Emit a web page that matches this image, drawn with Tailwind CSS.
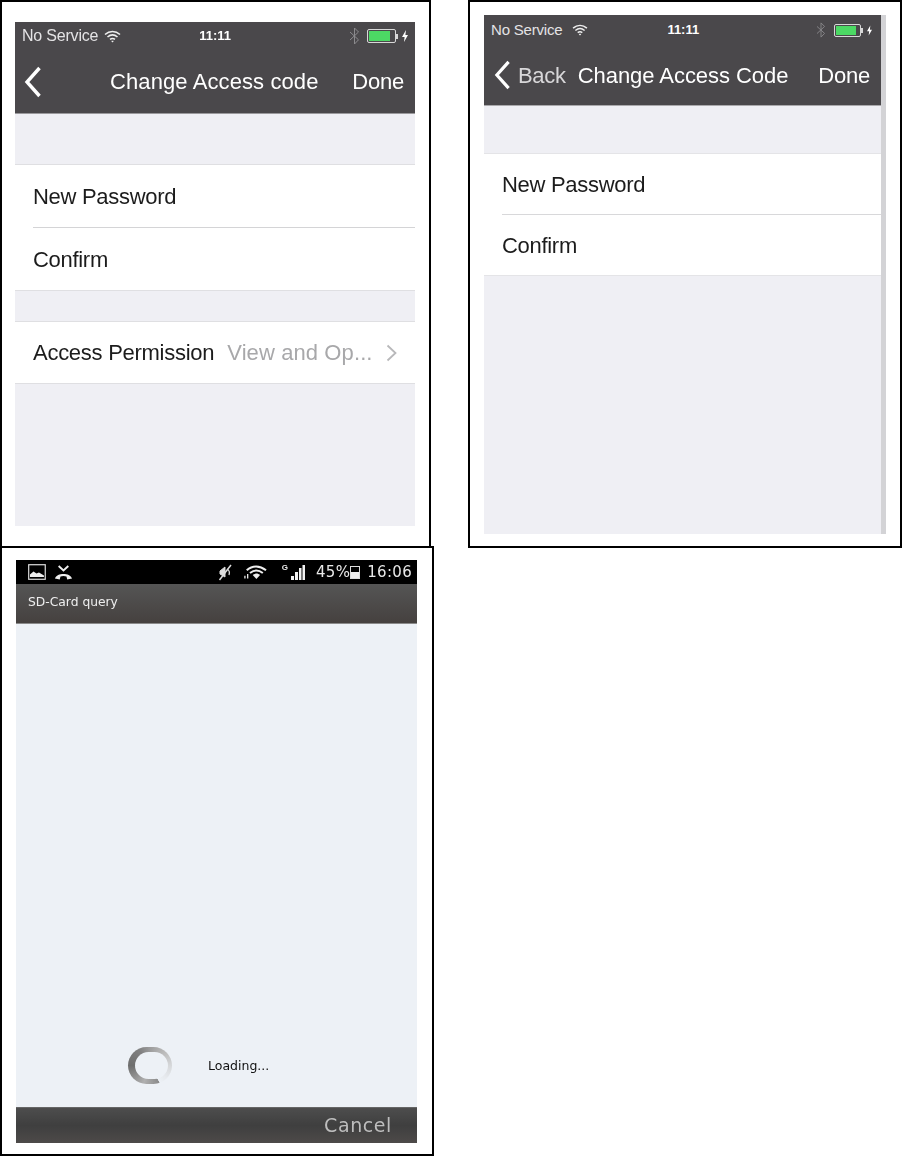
<!DOCTYPE html>
<html lang="en">
<head>
<meta charset="UTF-8">
<title>Access code screens</title>
<script src="https://cdn.jsdelivr.net/npm/@tailwindcss/browser@4"></script>
</head>
<body class="bg-white font-['Liberation_Sans',Arial,sans-serif]">
<div class="flex w-[902px] h-[1157px] items-start overflow-hidden">
  <!-- left column -->
  <div class="w-[434px] shrink-0">
    <!-- Change Access code -->
    <div class="w-[431px] h-[548px] border-2 border-black pl-[13px] pt-[20px]">
      <div class="w-[400px] h-[504px] bg-[#efeff4] flex flex-col blur-[0.4px]">
        <div class="h-[92px] bg-[#4a484b] text-white border-b border-[#9a999c]">
          <div class="h-[28px] flex items-center pl-[7px] pr-[6px] text-[16px] text-[#e4e3e5]">
            <span class="tracking-[-0.2px] whitespace-nowrap">No Service</span>
            <svg class="ml-[6px]" width="17" height="13" viewBox="0 0 17 13" fill="none" stroke="#eee" stroke-width="1.6"><path d="M1 4.500C5.500.5 11.500.5 16 4.500M3.500 7C6.500 4.500 10.500 4.500 13.500 7M6 9.400C7.500 8.300 9.500 8.300 11 9.400"/><path d="M8.500 12.400 7.200 11c.8-.5 1.800-.5 2.600 0z" fill="#eee" stroke="none"/></svg>
            <span class="ml-[78px] text-[13px] font-bold text-white">11:11</span>
            <svg class="ml-[118px]" width="11" height="18" viewBox="0 0 11 18" fill="none" stroke="#8b8a8d" stroke-width="1"><path d="M1 5 9.500 12.800 5.500 17V1L9.500 5 1 13"/></svg>
            <div class="ml-[7px] w-[29px] h-[14px] border border-[#d8d8d8] rounded-[2px] p-[1px]"><div class="w-[21px] h-full bg-[#4cd964]"></div></div>
            <div class="w-[2px] h-[5px] bg-[#d8d8d8]"></div>
            <svg class="ml-[4px]" width="6" height="12" viewBox="0 0 6 12"><path d="M4 0 0 7H2.600L2 12 6 5H3.400z" fill="#fff"/></svg>
          </div>
          <div class="h-[63px] flex items-center pl-[9px] pr-[11px]">
            <svg width="18" height="32" viewBox="0 0 18 32" fill="none" stroke="#fff" stroke-width="3.4"><path d="M15.500 2 3 16l12.500 14"/></svg>
            <span class="ml-[68px] text-[22px] tracking-[0.1px] whitespace-nowrap">Change Access code</span>
            <span class="ml-auto text-[22px] tracking-[-0.2px]">Done</span>
          </div>
        </div>
        <div class="mt-[50px] bg-white border-y border-[#dfdfe2]">
          <div class="h-[63px] ml-[18px] flex items-center text-[22px] tracking-[-0.3px] text-[#1c1c1c] border-b border-[#d4d4d6]">New Password</div>
          <div class="h-[62px] ml-[18px] flex items-center text-[22px] tracking-[-0.3px] text-[#1c1c1c]">Confirm</div>
        </div>
        <div class="mt-[30px] h-[63px] bg-white border-y border-[#dfdfe2] pl-[18px] pr-[18px] flex items-center text-[22px]">
          <span class="text-[#1c1c1c] tracking-[-0.27px] whitespace-nowrap">Access Permission</span>
          <span class="ml-[13px] text-[#a8a8aa] tracking-[0.1px] whitespace-nowrap">View and Op...</span>
          <svg class="ml-auto" width="11" height="18" viewBox="0 0 11 18" fill="none" stroke="#b8b8ba" stroke-width="1.8"><path d="M1.500 1.500 9.500 9l-8 7.500"/></svg>
        </div>
      </div>
    </div>
    <!-- SD-Card query -->
    <div class="-mt-[2px] w-[434px] h-[610px] border-2 border-black pl-[14px] pt-[12px]">
      <div class="w-[401px] h-[583px] bg-[#edf1f6] flex flex-col blur-[0.4px]">
        <div class="h-[24px] bg-black flex items-center pl-[12px] pr-[5px] text-[#e8e8e8]">
          <svg width="18" height="16" viewBox="0 0 18 16"><rect x=".7" y=".7" width="16.600" height="14.600" fill="none" stroke="#ddd" stroke-width="1.200"/><path d="M2 13V10.500l3.500-3 3 2 2.500-1 5 3V13z" fill="#eee"/></svg>
          <svg class="ml-[8px]" width="19" height="15" viewBox="0 0 17 14"><path d="M4 1 8.500 5 13 1" fill="none" stroke="#eee" stroke-width="1.800"/><path d="M.5 12.500C2.500 7 14.500 7 16.500 12.500L12 13.500 11.300 10.800C9.500 10 7.500 10 5.700 10.800L5 13.500z" fill="#eee"/></svg>
          <svg class="ml-[145px]" width="15" height="17" viewBox="0 0 15 17" fill="none" stroke="#ddd"><path d="M2 7 7 3V13L2 10z" fill="#ddd"/><path d="M9 5c2 1 3 3 2 6" stroke-width="1.300"/><path d="M1.500 16 13 1" stroke-width="1.500"/></svg>
          <svg class="ml-[11px]" width="23" height="15" viewBox="0 0 25 15" fill="none" stroke="#eee" stroke-width="2.200"><path d="M3 5C9-.5 17-.5 24 5M6.500 8C11 4.500 16 4.500 20.500 8"/><path d="M9.500 10.200C13 8 14.500 8 17.500 10.200L13.500 14.500z" fill="#eee" stroke="none"/><path d="M1 14V11M4 14V9" stroke-width="1.400"/></svg>
          <span class="ml-[15px] text-[8px] font-bold leading-none self-start mt-[4px]">G</span>
          <svg class="ml-[2px]" width="16" height="15" viewBox="0 0 14 15" fill="#f2f2f2"><rect x="0" y="11" width="3" height="4"/><rect x="4" y="7" width="3" height="8"/><rect x="8" y="3" width="2.500" height="12"/><rect x="11.500" y="0" width="2.500" height="15"/></svg>
          <span class="ml-[10px] text-[15px] tracking-[0.3px] font-['DejaVu_Sans',sans-serif]">45%</span>
          <div class="w-[10px] h-[13px] border border-[#ddd] flex items-end"><div class="w-full h-[6px] bg-[#eee]"></div></div>
          <span class="ml-[7px] text-[15px] tracking-[0.3px] font-['DejaVu_Sans',sans-serif]">16:06</span>
        </div>
        <div class="h-[40px] bg-linear-to-b from-[#555555] to-[#45413f] border-b border-[#8a8a8a] pl-[12px] pb-[3px] flex items-center text-[12.300px] text-[#eeeeee] font-['DejaVu_Sans',sans-serif]">SD-Card query</div>
        <div class="flex-1 flex items-end pl-[112px] pb-[23px]">
          <!-- spinner: gradient ellipse with an off-centre hole -->
          <div class="relative w-[44px] h-[37px] rounded-full bg-[conic-gradient(#9c9c9c_0deg,#bcbcbc_50deg,#d6d8da_90deg,#e6e9ed_125deg,#edf1f6_150deg,#8c8c8c_152deg,#b0b0b0_200deg,#6e6e6e_270deg,#808080_325deg,#9c9c9c_360deg)]">
            <div class="absolute left-[7px] top-[5px] w-[33px] h-[27px] rounded-full bg-[#edf1f6]"></div>
          </div>
          <span class="ml-[36px] mb-[8px] text-[12.500px] text-[#111] font-['DejaVu_Sans',sans-serif]">Loading...</span>
        </div>
        <div class="h-[36px] bg-linear-to-b from-[#4d4d4d] via-[#3f3f3f] to-[#4d4a49] border-t border-[#666] pr-[25px] flex items-center justify-end text-[19px] tracking-[0.6px] text-[#bdbdbd] font-['DejaVu_Sans',sans-serif]">Cancel</div>
      </div>
    </div>
  </div>
  <!-- Change Access Code, Back -->
  <div class="ml-[34px] w-[434px] h-[548px] border-2 border-black pl-[14px] pt-[13px]">
    <div class="w-[402px] h-[519px] flex blur-[0.4px]">
      <div class="w-[397px] bg-[#efeff4] flex flex-col">
        <div class="h-[91px] bg-[#4a484b] text-white border-b border-[#aaa9ac]">
          <div class="h-[30px] flex items-center pl-[7px] pr-[6px] text-[15px] text-[#e4e3e5]">
            <span class="tracking-[-0.2px] whitespace-nowrap">No Service</span>
            <svg class="ml-[10px]" width="16" height="12" viewBox="0 0 17 13" fill="none" stroke="#eee" stroke-width="1.6"><path d="M1 4.500C5.500.5 11.500.5 16 4.500M3.500 7C6.500 4.500 10.500 4.500 13.500 7M6 9.400C7.500 8.300 9.500 8.300 11 9.400"/><path d="M8.500 12.400 7.200 11c.8-.5 1.800-.5 2.600 0z" fill="#eee" stroke="none"/></svg>
            <span class="ml-[79px] text-[13px] font-bold text-white">11:11</span>
            <svg class="ml-[117px]" width="10" height="16" viewBox="0 0 11 18" fill="none" stroke="#8b8a8d" stroke-width="1"><path d="M1 5 9.500 12.800 5.500 17V1L9.500 5 1 13"/></svg>
            <div class="ml-[8px] w-[27px] h-[13px] border border-[#d8d8d8] rounded-[2px] p-[1px]"><div class="w-[20px] h-full bg-[#4cd964]"></div></div>
            <div class="w-[2px] h-[5px] bg-[#d8d8d8]"></div>
            <svg class="ml-[4px]" width="5" height="11" viewBox="0 0 6 12"><path d="M4 0 0 7H2.600L2 12 6 5H3.400z" fill="#fff"/></svg>
          </div>
          <div class="h-[60px] flex items-center pl-[10px] pr-[11px]">
            <svg width="17" height="30" viewBox="0 0 18 32" fill="none" stroke="#fff" stroke-width="3.400"><path d="M15.500 2 3 16l12.500 14"/></svg>
            <span class="ml-[7px] text-[22px] tracking-[-0.3px] text-[#d8d7d9]">Back</span>
            <span class="ml-[12px] text-[22px] tracking-[-0.05px] whitespace-nowrap">Change Access Code</span>
            <span class="ml-auto text-[22px] tracking-[-0.2px]">Done</span>
          </div>
        </div>
        <div class="mt-[47px] bg-white border-y border-[#e4e4e7]">
          <div class="h-[61px] ml-[18px] flex items-center text-[22px] tracking-[-0.3px] text-[#1c1c1c] border-b border-[#d8d8da]">New Password</div>
          <div class="h-[60px] ml-[18px] flex items-center text-[22px] tracking-[-0.3px] text-[#1c1c1c]">Confirm</div>
        </div>
      </div>
      <div class="w-[5px] bg-[#d3d3d6]"></div>
    </div>
  </div>
</div>
</body>
</html>
